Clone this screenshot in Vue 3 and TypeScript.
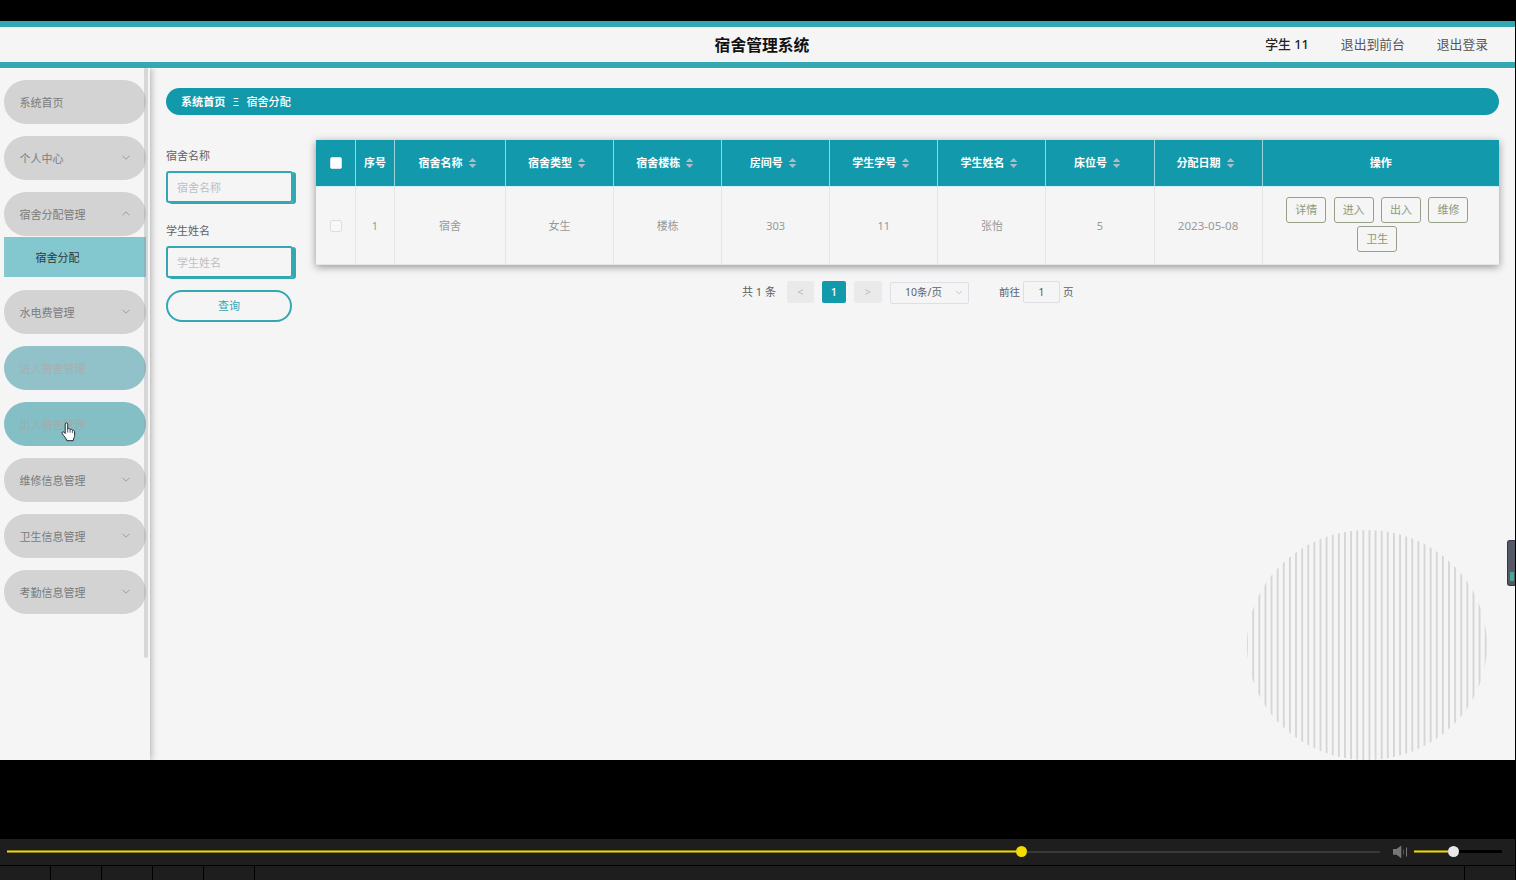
<script setup lang="ts">
interface MenuItem {
  label: string
  arrow?: 'down' | 'up'
  state?: 'fading' | 'hover'
  child?: string
}

const menu: MenuItem[] = [
  { label: '系统首页' },
  { label: '个人中心', arrow: 'down' },
  { label: '宿舍分配管理', arrow: 'up', child: '宿舍分配' },
  { label: '水电费管理', arrow: 'down' },
  { label: '进入宿舍管理', arrow: 'down', state: 'fading' },
  { label: '出入宿舍管理', arrow: 'down', state: 'hover' },
  { label: '维修信息管理', arrow: 'down' },
  { label: '卫生信息管理', arrow: 'down' },
  { label: '考勤信息管理', arrow: 'down' },
]

const columns: { title: string; value: string }[] = [
  { title: '宿舍名称', value: '宿舍' },
  { title: '宿舍类型', value: '女生' },
  { title: '宿舍楼栋', value: '楼栋' },
  { title: '房间号', value: '303' },
  { title: '学生学号', value: '11' },
  { title: '学生姓名', value: '张怡' },
  { title: '床位号', value: '5' },
  { title: '分配日期', value: '2023-05-08' },
]

const actions: string[] = ['详情', '进入', '出入', '维修', '卫生']
const filters: string[] = ['宿舍名称', '学生姓名']
const stripes: number[] = Array.from({ length: 40 }, (_, i) => -0.9 + i * 6.12)
</script>

<template>
  <div class="frame">
    <div class="page">
      <header class="top">
        <h1>宿舍管理系统</h1>
        <nav>
          <b>学生 11</b>
          <span>退出到前台</span>
          <span>退出登录</span>
        </nav>
      </header>

      <div class="body">
        <aside class="side">
          <div v-for="m in menu" :key="m.label" class="group">
            <div class="item" :class="m.state">
              <span>{{ m.label }}</span>
              <svg v-if="m.arrow" width="8" height="5" viewBox="0 0 8 5" fill="none">
                <path :d="m.arrow === 'up' ? 'M0.5 4.3 4 0.8 7.5 4.3' : 'M0.5 0.7 4 4.2 7.5 0.7'" stroke="currentColor" stroke-width=".9" />
              </svg>
            </div>
            <div v-if="m.child" class="child">{{ m.child }}</div>
          </div>
          <div class="thumb"></div>
        </aside>

        <main class="main">
          <div class="crumb"><b>系统首页</b><span class="sep">Ξ</span><b class="cur">宿舍分配</b></div>
          <div class="content">
            <form class="filters">
              <div v-for="f in filters" :key="f" class="field">
                <label>{{ f }}</label>
                <div class="input">{{ f }}</div>
              </div>
              <div class="query">查询</div>
            </form>

            <section class="result">
              <div class="table">
                <div class="row head">
                  <div class="cell"><i class="box"></i></div>
                  <div class="cell">序号</div>
                  <div v-for="c in columns" :key="c.title" class="cell sortable">
                    {{ c.title }}
                    <svg width="19" height="12" viewBox="0 0 19 12" fill="#a9bcc8">
                      <path d="M5.8 5 9.6 1 13.4 5ZM5.8 7 9.6 11 13.4 7Z" />
                    </svg>
                  </div>
                  <div class="cell">操作</div>
                </div>
                <div class="row data">
                  <div class="cell"><i class="box"></i></div>
                  <div class="cell">1</div>
                  <div v-for="c in columns" :key="c.title" class="cell">{{ c.value }}</div>
                  <div class="cell ops"><span v-for="a in actions" :key="a">{{ a }}</span></div>
                </div>
              </div>

              <div class="pager">
                <span class="total">共 1 条</span>
                <span class="pg arrow">&lt;</span>
                <span class="pg on">1</span>
                <span class="pg arrow next">&gt;</span>
                <span class="size">10条/页
                  <svg width="8" height="5" viewBox="0 0 8 5" fill="none"><path d="M1 .8 4 3.8 7 .8" stroke="#c0c4cc" /></svg>
                </span>
                <span class="goto">前往</span>
                <span class="num">1</span>
                <span class="unit">页</span>
              </div>
            </section>
          </div>
        </main>
      </div>

      <svg class="disc" width="240" height="230" viewBox="0 0 240 230">
        <defs><clipPath id="disc-clip"><ellipse cx="120" cy="115" rx="120" ry="115" /></clipPath></defs>
        <g clip-path="url(#disc-clip)" fill="#d6d6d6">
          <rect v-for="x in stripes" :key="x" :x="x" y="0" width="1.9" height="230" />
        </g>
      </svg>
      <div class="meter"><i></i></div>
      <svg class="hand" width="15" height="20" viewBox="0 0 15 20">
        <path d="M4.2 11.5V2.2C4.2.5 6.7.5 6.7 2.2V7C7.3 6.2 9 6.5 9.1 7.6 9.8 6.9 11.3 7.3 11.4 8.3 12.3 7.8 13.6 8.4 13.6 9.7V13.2C13.6 15.2 12.5 16 12.2 18.7H5.8C5.4 16.5 3 14.2 1.3 11.7.4 10.3 2 9.2 3.1 10.2Z" fill="#fff" stroke="#222b35" stroke-width="1" stroke-linejoin="round" />
        <path d="M6.7 7V10.5M9.1 7.8V10.7M11.4 8.5V10.9" stroke="#222b35" stroke-width=".8" />
      </svg>
    </div>

    <footer class="player">
      <div class="controls">
        <div class="track"><i class="played"></i><i class="knob"></i><i class="rest"></i></div>
        <svg width="15" height="14" viewBox="0 0 15 14" fill="#777">
          <path d="M0 4H3.5L8.3.5V13.2L3.5 9.8H0Z" />
          <path d="M10 4.5H11V9.5H10Z" fill="#555" /><path d="M13 2.5H14V11.5H13Z" />
        </svg>
        <div class="volume"><i class="played"></i><i class="knob"></i><i class="rest"></i></div>
      </div>
      <div class="tabs"><i v-for="n in 5" :key="n"></i><i class="wide"></i><i class="end"></i></div>
    </footer>
  </div>
</template>

<style>
body { background: #000; overflow: hidden; }
</style>

<style scoped>
* { box-sizing: border-box; }
.frame {
  width: 1516px; height: 880px; padding: 21px 1px 0 0; background: #000;
  display: flex; flex-direction: column; justify-content: space-between;
  font: 11px/16px "Noto Sans", "Noto Sans CJK SC", sans-serif;
}
.page { position: relative; height: 739px; background: #f5f5f5; overflow: hidden; display: flex; flex-direction: column; }
.top {
  height: 47px; flex: none; border: solid #33a8b3; border-width: 6px 0;
  display: grid; grid-template-columns: 1fr auto 1fr; align-items: center;
  padding: 0 27px 0 36px; box-shadow: inset 0 1px #fff, 0 1px #fff;
}
.top h1 { grid-column: 2; margin: 0; font-size: 15.8px; line-height: 22px; font-weight: 700; color: #111; }
.top nav { display: flex; justify-content: flex-end; gap: 32px; padding-bottom: 1px; font-size: 12.8px; color: #555; }
.top b { font-weight: 500; color: #222; }
.body { display: flex; flex: 1; }
.side {
  position: relative; width: 150px; padding: 12px 4px 0; flex: none;
  display: flex; flex-direction: column; gap: 12px; box-shadow: 1px 0 7px rgba(0, 0, 0, .3);
  clip-path: inset(0 -12px 0 0);
}
.item {
  height: 44px; border-radius: 22px; background: #d3d3d3; color: #7b7b7b;
  display: flex; align-items: center; justify-content: space-between; padding: 2px 16px 0 15.5px;
}
.item svg { margin-top: -4px; color: #999; }
.fading { background: #92c2c9; color: #a5b0b0; }
.hover { background: #84bfc6; color: #9baeaf; }
.fading svg, .hover svg { color: #9eb4b5; }
.child { height: 40px; line-height: 41px; margin: 1px 0; padding-left: 31.5px; background: #84c8cf; color: #333; }
.thumb { position: absolute; right: 2px; top: 0; width: 4px; height: 590px; background: rgba(144, 147, 153, .3); border-radius: 0 0 3px 3px; }
.main { flex: 1; padding: 20px 16px 0; }
.crumb { height: 27px; border-radius: 14px; background: #1299ac; color: #fff; display: flex; align-items: center; padding-left: 15px; }
.sep { width: 21px; text-align: center; font-size: 10px; }
.cur { font-weight: 500; }
.crumb b { font-size: 11.1px; }
.content { display: flex; padding-top: 25px; }
.filters { width: 150px; flex: none; padding-top: 8px; }
.field { height: 75px; color: #606266; }
.field label { display: block; height: 23px; }
.input { width: 127px; height: 32px; border: 2px solid #33a8b3; border-radius: 3px; box-shadow: 3px 1px 0 #33a8b3; padding: 0 9px; line-height: 29px; color: #bcbfc5; }
.query { width: 126px; height: 32px; margin-top: -8px; border: 2px solid #33a8b3; border-radius: 16px; line-height: 28px; text-align: center; color: #33a8b3; }
.result { flex: 1; }
.table { box-shadow: 0 2px 8px rgba(0, 0, 0, .4); background: #f5f5f5; }
.row { display: grid; grid-template-columns: 40px 39px 111px repeat(7, 108.1px) 1fr; }
.cell { display: flex; align-items: center; justify-content: center; border-right: 1px solid #e6e6e6; border-bottom: 1px solid #e6e6e6; }
.head .cell { height: 47px; background: #1299ac; color: #fff; font-weight: 700; border-right-color: #9bd5dd; border-bottom-color: #d3f1f5; }
.data .cell { height: 78px; color: #999; padding-top: 1px; }
.data .cell:nth-child(10) { font-size: 11.6px; }
.cell:last-child { border-right: 0; }
.box { width: 12px; height: 12px; background: #f8f8f8; border: 1px solid #dcdfe6; border-radius: 2px; }
.head .box { background: #fff; }
.data .ops { flex-wrap: wrap; align-content: center; gap: 3px 7.5px; padding: 0 23px 2px 16px; }
.ops span { width: 39.9px; height: 26px; border: 1px solid #98a08a; border-radius: 3px; line-height: 24px; text-align: center; color: #8b9a7a; }
.pager { display: flex; align-items: center; padding: 16px 0 0 426px; color: #606266; height: 38px; }
.total { width: 45px; white-space: nowrap; }
.pg { height: 22px; line-height: 22px; text-align: center; border-radius: 2px; }
.arrow { width: 27px; background: #eaeaea; color: #b8bbc2; }
.arrow.next { width: 28px; }
.on { width: 24px; margin: 0 8px; background: #1299ac; color: #fff; font-weight: 500; }
.size { width: 79px; height: 22px; margin: 1px 0 0 8px; border: 1px solid #dcdfe6; border-radius: 2px; line-height: 20px; padding: 0 5px 1px 14px; display: flex; align-items: center; justify-content: space-between; font-size: 10.5px; }
.goto { width: 24px; margin-left: 30px; font-size: 10.5px; }
.num { width: 37px; height: 22px; border: 1px solid #dcdfe6; border-radius: 2px; line-height: 20px; text-align: center; }
.unit { margin-left: 3px; font-size: 10.5px; }
.disc { position: absolute; left: 1247px; top: 509px; }
.meter { position: absolute; right: 0; top: 519px; width: 8px; height: 46px; padding: 5px 1px 4px 2px; background: #555965; border: 1px solid #343844; border-right: 0; border-radius: 3px 0 0 3px; display: flex; align-items: flex-end; }
.meter i { width: 4px; height: 9px; background: #4aa795; }
.hand { position: absolute; left: 61px; top: 401px; }
.player { height: 41px; display: flex; flex-direction: column; gap: 1px; }
.controls { height: 26px; flex: none; background: #1e1e1e; display: flex; align-items: center; padding: 0 13px 1px 7px; }
.track, .volume { display: flex; align-items: center; width: 1373px; }
.volume { width: 88px; margin-left: 6px; }
.controls svg { margin-left: 13px; }
.played { width: 1009px; height: 3px; background: #f2d90a; border: solid #8d7f0d; border-width: 1px 0; }
.volume .played { width: 34px; }
.knob { width: 11px; height: 11px; border-radius: 50%; background: #f5dc00; }
.volume .knob { background: #e8e8e8; }
.rest { flex: 1; height: 2px; background: #393939; }
.volume .rest { height: 3px; background: #000; }
.tabs { flex: 1; display: flex; gap: 1px; }
.tabs i { width: 50px; background: #1e1e1e; }
.tabs .wide { flex: 1; }
</style>
